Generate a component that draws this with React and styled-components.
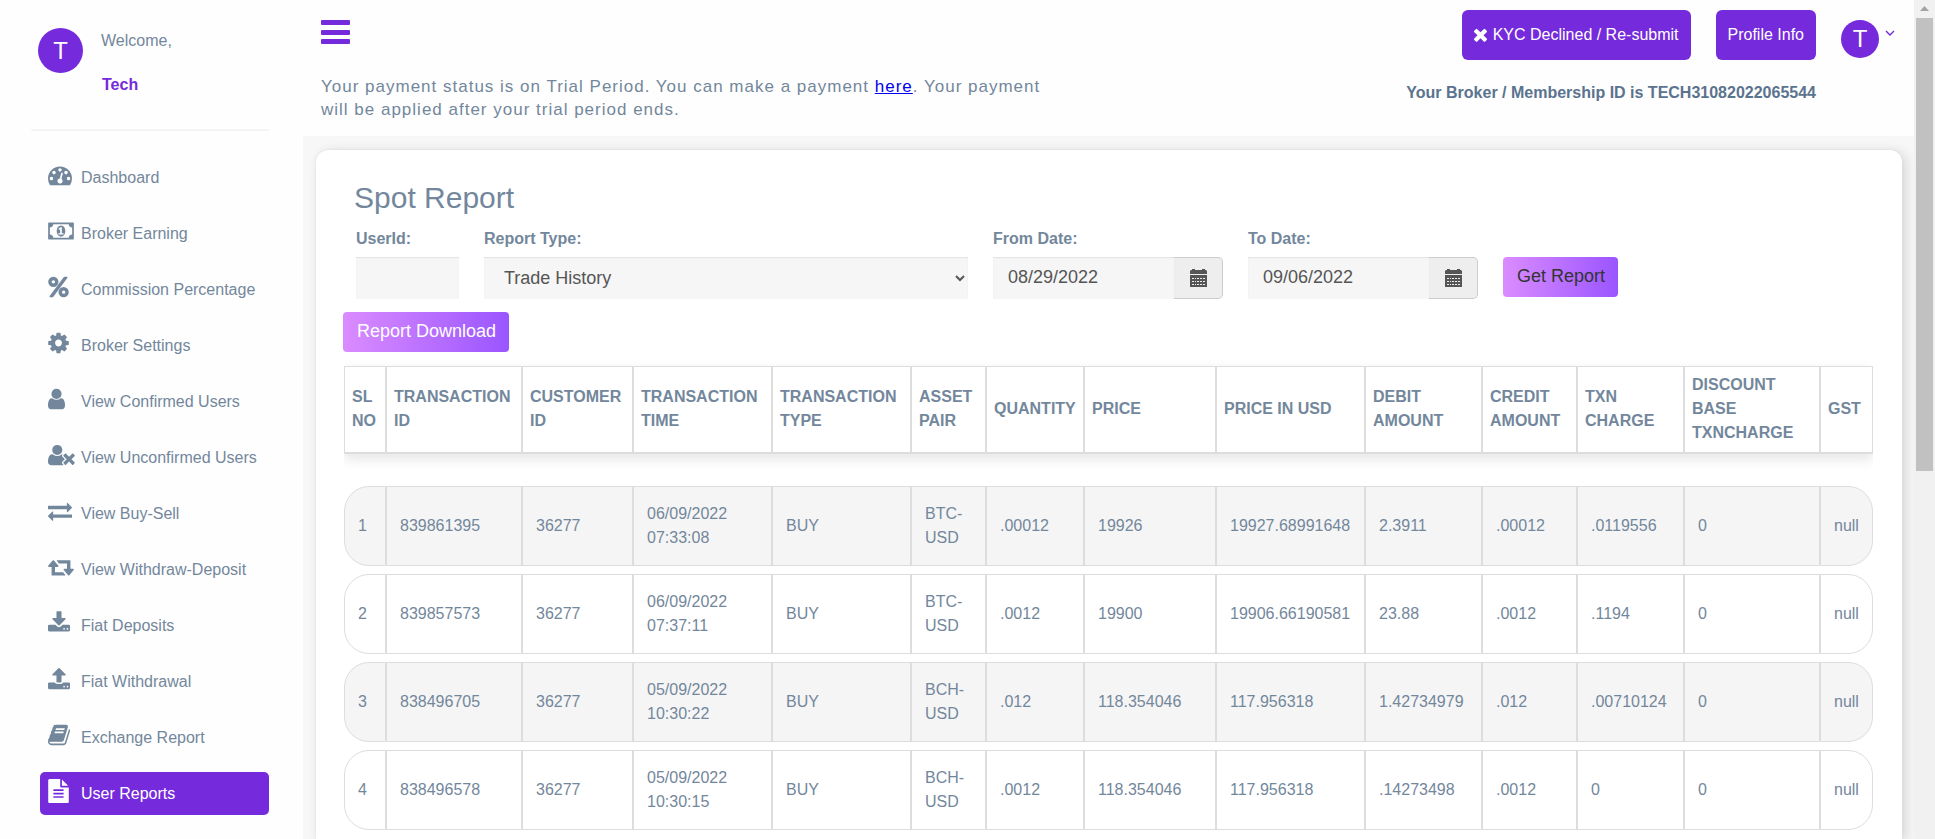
import React from "react";
import styled, { createGlobalStyle, css } from "styled-components";

const c = {
  purple: "#752adb",
  text: "#73879c",
  strong: "#5a738e",
  line: "#dddddd",
  field: "#f6f6f6",
};

const GlobalStyle = createGlobalStyle`
  *, *::before, *::after { box-sizing: border-box; }
  html, body { margin: 0; padding: 0; }
  body {
    font-family: "Liberation Sans", Arial, sans-serif;
    font-size: 16px;
    line-height: 24px;
    color: ${c.text};
    background: #fefefe;
  }
  button, input, select { font-family: inherit; }
`;

const Page = styled.div`
  display: flex;
  height: 100vh;
  overflow: hidden;
`;

/* ---------- sidebar ---------- */

const Sidebar = styled.aside`
  flex: 0 0 303px;
  padding: 28px 34px 0 31px;
  background: #fefefe;
`;

const Profile = styled.div`
  display: flex;
  align-items: flex-start;
  gap: 18px;
  height: 103px;
  padding-left: 7px;
  border-bottom: 2px solid #f5f5f5;
`;

const Avatar = styled.span`
  display: flex;
  flex: none;
  align-items: center;
  justify-content: center;
  width: ${(p) => p.$size}px;
  height: ${(p) => p.$size}px;
  border-radius: 50%;
  background: ${c.purple};
  color: #fff;
  font-size: 24px;
`;

const Greeting = styled.div`
  display: flex;
  flex-direction: column;
  gap: 20px;
  padding-top: 1px;
`;

const UserName = styled.strong`
  padding-left: 1px;
  color: ${c.purple};
`;

const Nav = styled.nav`
  display: flex;
  flex-direction: column;
  gap: 13px;
  padding: 25px 0 0 9px;
`;

const NavItem = styled.a`
  display: flex;
  align-items: flex-start;
  height: 43px;
  padding: 7px 0 0 8px;
  border-radius: 5px;
  color: ${c.text};
  text-decoration: none;
  white-space: nowrap;
  ${(p) =>
    p.$active &&
    css`
      background: ${c.purple};
      color: #fff;
    `}
`;

const NavIcon = styled.span`
  display: flex;
  flex: 0 0 33px;
  height: 24px;
`;

const NavLabel = styled.span`
  padding-top: 3px;
`;

/* ---------- top bar ---------- */

const Main = styled.div`
  display: flex;
  flex: 1;
  flex-direction: column;
  min-width: 0;
  background: #f7f7f7;
`;

const TopBar = styled.header`
  display: flex;
  flex: 0 0 136px;
  justify-content: space-between;
  gap: 40px;
  padding: 10px 19px 0 18px;
  background: #fefefe;
`;

const Notice = styled.div`
  max-width: 730px;
`;

const MenuButton = styled.button`
  display: block;
  margin: 10px 0 31px;
  padding: 0;
  border: 0;
  background: none;
  color: ${c.purple};
  line-height: 0;
`;

const NoticeText = styled.p`
  margin: 0;
  font-size: 17px;
  letter-spacing: 1px;
  line-height: 23px;
  a { color: #0000ee; }
`;

const Account = styled.div`
  display: flex;
  flex-direction: column;
  gap: 21px;
`;

const AccountRow = styled.div`
  display: flex;
  align-items: center;
  justify-content: flex-end;
  gap: 25px;
`;

const PurpleButton = styled.button`
  display: flex;
  align-items: center;
  gap: 6px;
  height: 50px;
  padding: 0 12px;
  border: 0;
  border-radius: 6px;
  background: ${c.purple};
  color: #fff;
  font-size: 16px;
  white-space: nowrap;
`;

const AccountMenu = styled.button`
  display: flex;
  align-items: flex-start;
  gap: 6px;
  margin-top: 7px;
  padding: 0;
  border: 0;
  background: none;
  color: ${c.purple};
  svg { margin-top: 10px; }
`;

const MemberId = styled.strong`
  padding-right: 79px;
  color: ${c.strong};
  text-align: right;
`;

/* ---------- report card ---------- */

const Card = styled.main`
  flex: 1;
  margin: 14px 12px 0 13px;
  padding: 30px 29px 0 27px;
  border-radius: 12px 12px 0 0;
  background: #fff;
  box-shadow: 0 0 2px #d8d8d8, 4px 2px 12px #d9d5d9;
`;

const Title = styled.h1`
  margin: 0 0 11px 11px;
  font-size: 30px;
  font-weight: 400;
  line-height: 36px;
`;

const Filters = styled.form`
  display: grid;
  grid-template-columns: 103fr 484fr 230fr 230fr 370fr;
  gap: 25px;
  align-items: end;
  padding-left: 13px;
`;

const Field = styled.div`
  display: flex;
  flex-direction: column;
  gap: 6px;
`;

const FieldLabel = styled.label`
  font-weight: 700;
`;

const control = css`
  width: 100%;
  min-width: 0;
  height: 42px;
  border: 0;
  border-radius: 0;
  background: ${c.field};
  box-shadow: inset 0 1px 1px #e2e2e2;
  color: #555;
  font-size: 18px;
`;

const TextInput = styled.input`
  ${control}
  padding: 0 15px 2px;
`;

const Select = styled.select`
  ${control}
  padding: 0 0 0 16px;
`;

const DateGroup = styled.div`
  display: flex;
`;

const CalendarButton = styled.button`
  display: flex;
  flex: 0 0 49px;
  align-items: center;
  justify-content: center;
  height: 42px;
  padding: 0;
  border: 1px solid #ccc;
  border-left: 0;
  border-radius: 0 5px 5px 0;
  background: #eee;
  color: #555;
`;

const GradientButton = styled.button`
  justify-self: start;
  height: 40px;
  padding: 0 13px 2px 14px;
  border: 0;
  border-radius: 4px;
  background: linear-gradient(90deg, #da8cff, #9a55ff);
  color: ${(p) => (p.$dark ? "#333" : "#fff")};
  font-size: 18px;
`;

const SubmitCell = styled.div`
  height: 42px;
`;

const Download = styled.div`
  margin-top: 13px;
  line-height: 0;
`;

const TableArea = styled.div`
  margin-left: 1px;
  padding-top: 6px;
  overflow: hidden;
`;

const Table = styled.table`
  width: 100%;
  table-layout: fixed;
  border-collapse: separate;
  border-spacing: 0 8px;
  tbody::before {
    content: "";
    display: block;
    height: 16px;
  }
`;

const HeadRow = styled.tr`
  height: 88px;
  box-shadow: 0 5px 12px #e6e4e6;
`;

const HeadCell = styled.th`
  padding: 0 4px 2px 7px;
  border: 1px solid ${c.line};
  border-bottom-width: 2px;
  background: #fff;
  text-align: left;
  text-transform: uppercase;
`;

const Row = styled.tr`
  height: 80px;
  background: #fff;
  &:nth-child(odd) td { background: #f5f5f5; }
`;

const Cell = styled.td`
  padding: 0 8px 0 13px;
  border: 1px solid ${c.line};
  &:first-child { border-radius: 25px 0 0 25px; }
  &:last-child { border-radius: 0 25px 25px 0; }
`;

/* ---------- window scroll bar ---------- */

const ScrollTrack = styled.div`
  display: flex;
  flex: 0 0 21px;
  flex-direction: column;
  align-items: center;
  background: #f1f1f1;
`;

const ScrollArrow = styled.svg`
  flex: none;
  margin: 6px 0 7px;
`;

const ScrollThumb = styled.div`
  width: 17px;
  height: 54%;
  background: #c1c1c1;
`;

/* ---------- icons ---------- */

function Glyph({ box, path, height = 24 }) {
  const [, , w, h] = box.split(" ").map(Number);
  return (
    <svg viewBox={box} width={Math.round((w * height) / h)} height={height} fill="currentColor" fillRule="evenodd" aria-hidden="true">
      <path d={path} />
    </svg>
  );
}

const icons = {
  gauge: {
    box: "0 0 1792 1792",
    path: "M384 1152q0-53-37.5-90.5t-90.5-37.5-90.5 37.5-37.5 90.5 37.5 90.5 90.5 37.5 90.5-37.5 37.5-90.5zm192-448q0-53-37.5-90.5t-90.5-37.5-90.5 37.5-37.5 90.5 37.5 90.5 90.5 37.5 90.5-37.5 37.5-90.5zm428 481l101-382q6-26-7.5-48.5t-38.5-29.5-48 6.5-30 39.5l-101 382q-60 5-107 43.5t-63 98.5q-20 77 20 146t117 89 146-20 89-117q16-60-6-117t-72-91zm660-33q0-53-37.5-90.5t-90.5-37.5-90.5 37.5-37.5 90.5 37.5 90.5 90.5 37.5 90.5-37.5 37.5-90.5zm-640-640q0-53-37.5-90.5t-90.5-37.5-90.5 37.5-37.5 90.5 37.5 90.5 90.5 37.5 90.5-37.5 37.5-90.5zm448 192q0-53-37.5-90.5t-90.5-37.5-90.5 37.5-37.5 90.5 37.5 90.5 90.5 37.5 90.5-37.5 37.5-90.5zm320 448q0 261-141 483-19 29-54 29h-1402q-35 0-54-29-141-221-141-483 0-182 71-348t191-286 286-191 348-71 348 71 286 191 191 286 71 348z",
  },
  money: {
    box: "0 -128 1920 1792",
    path: "M768 1024h384v-96h-128v-448h-114l-148 137 77 80q42-37 55-57h2v288h-128v96zm512-256q0 70-21 142t-59.5 134-101.5 101-138 39-138-39-101.5-101-59.5-134-21-142 21-142 59.5-134 101.5-101 138-39 138 39 101.5 101 59.5 134 21 142zm512 256v-512q-106 0-181-75t-75-181h-1152q0 106-75 181t-181 75v512q106 0 181 75t75 181h1152q0-106 75-181t181-75zm128-832v1152q0 26-19 45t-45 19h-1792q-26 0-45-19t-19-45v-1152q0-26 19-45t45-19h1792q26 0 45 19t19 45z",
  },
  percent: {
    box: "0 0 1536 1792",
    path: "M384 128a384 384 0 1 0 0 768 384 384 0 1 0 0-768zm0 256a128 128 0 1 1 0 256 128 128 0 1 1 0-256zM1152 896a384 384 0 1 0 0 768 384 384 0 1 0 0-768zm0 256a128 128 0 1 1 0 256 128 128 0 1 1 0-256zM1376 128q26 0 45 19t19 45q0 20-13 38l-1056 1408q-19 26-51 26h-160q-26 0-45-19t-19-45q0-20 13-38l1056-1408q19-26 51-26z",
  },
  cog: {
    box: "128 0 1536 1792",
    path: "M1152 896q0-106-75-181t-181-75-181 75-75 181 75 181 181 75 181-75 75-181zm512-109v222q0 12-8 23t-20 13l-185 28q-19 54-39 91 35 50 107 138 10 12 10 25t-9 23q-27 37-99 108t-94 71q-12 0-26-9l-138-108q-44 23-91 38-16 136-29 186-7 28-36 28h-222q-14 0-24.5-8.5t-11.5-21.5l-28-184q-49-16-90-37l-141 107q-10 9-25 9-14 0-25-11-126-114-165-168-7-10-7-23 0-12 8-23 15-21 51-66.5t54-70.5q-27-50-41-99l-183-27q-13-2-21-12.5t-8-23.5v-222q0-12 8-23t19-13l186-28q14-46 39-92-40-57-107-138-10-12-10-24 0-10 9-23 26-36 98.5-107.5t94.5-71.5q13 0 26 10l138 107q44-23 91-38 16-136 29-186 7-28 36-28h222q14 0 24.5 8.5t11.5 21.5l28 184q49 16 90 37l142-107q9-9 24-9 13 0 25 10 129 119 165 170 7 8 7 22 0 12-8 23-15 21-51 66.5t-54 70.5q26 50 41 98l183 28q13 2 21 12.5t8 23.5z",
  },
  user: {
    box: "256 0 1280 1792",
    path: "M1536 1399q0 109-62.5 187t-150.5 78h-854q-88 0-150.5-78t-62.5-187q0-85 8.5-160.5t31.5-152 58.5-131 94-89 134.5-34.5q131 128 313 128t313-128q76 0 134.5 34.5t94 89 58.5 131 31.5 152 8.5 160.5zm-256-887q0 159-112.5 271.5t-271.5 112.5-271.5-112.5-112.5-271.5 112.5-271.5 271.5-112.5 271.5 112.5 112.5 271.5z",
  },
  userTimes: {
    box: "0 0 2048 1792",
    path: "M704 896q-159 0-271.5-112.5t-112.5-271.5 112.5-271.5 271.5-112.5 271.5 112.5 112.5 271.5-112.5 271.5-271.5 112.5zm1077 320l249 249q9 9 9 23 0 13-9 22l-136 136q-9 9-22 9-14 0-23-9l-249-249-249 249q-9 9-23 9-13 0-22-9l-136-136q-9-9-9-22 0-14 9-23l249-249-249-249q-9-9-9-23 0-13 9-22l136-136q9-9 22-9 14 0 23 9l249 249 249-249q9-9 23-9 13 0 22 9l136 136q9 9 9 22 0 14-9 23zm-498 0l-181 181q-37 37-37 91 0 53 37 90l83 83q-21 3-44 3h-874q-121 0-194-69t-73-190q0-53 3.5-103.5t14-109 26.5-108.5 43-97.5 62-81 85.5-53.5 111.5-20q19 0 39 17 154 122 319 122t319-122q20-17 39-17 28 0 57 6-28 27-41 50t-13 56q0 54 37 91z",
  },
  exchange: {
    box: "0 0 1792 1792",
    path: "M1792 1184v192q0 13-9.5 22.5t-22.5 9.5h-1376v192q0 13-9.5 22.5t-22.5 9.5q-12 0-24-10l-319-320q-9-9-9-22 0-14 9-23l320-320q9-9 23-9 13 0 22.5 9.5t9.5 22.5v192h1376q13 0 22.5 9.5t9.5 22.5zm0-544q0 14-9 23l-320 320q-9 9-23 9-13 0-22.5-9.5t-9.5-22.5v-192h-1376q-13 0-22.5-9.5t-9.5-22.5v-192q0-13 9.5-22.5t22.5-9.5h1376v-192q0-14 9-23t23-9q12 0 24 10l319 319q9 9 9 23z",
  },
  retweet: {
    box: "0 128 1920 1792",
    path: "M1280 1632q0 13-9.5 22.5t-22.5 9.5h-960q-8 0-13.5-2t-9-7-5.5-8-3-11.5-1-11.5v-600h-192q-26 0-45-19t-19-45q0-24 15-41l320-384q19-22 49-22t49 22l320 384q15 17 15 41 0 26-19 45t-45 19h-192v384h576q16 0 25 11l160 192q7 10 7 21zm640-416q0 24-15 41l-320 384q-20 23-49 23t-49-23l-320-384q-15-17-15-41 0-26 19-45t45-19h192v-384h-576q-16 0-25-12l-160-192q-7-9-7-20 0-13 9.5-22.5t22.5-9.5h960q8 0 13.5 2t9 7 5.5 8 3 11.5 1 11.5v600h192q26 0 45 19t19 45z",
  },
  download: {
    box: "64 0 1664 1792",
    path: "M1344 1344q0-26-19-45t-45-19-45 19-19 45 19 45 45 19 45-19 19-45zm256 0q0-26-19-45t-45-19-45 19-19 45 19 45 45 19 45-19 19-45zm128-224v320q0 40-28 68t-68 28h-1472q-40 0-68-28t-28-68v-320q0-40 28-68t68-28h465l135 136q58 56 136 56t136-56l136-136h464q40 0 68 28t28 68zm-325-569q17 41-14 70l-448 448q-18 19-45 19t-45-19l-448-448q-31-29-14-70 17-39 59-39h256v-448q0-26 19-45t45-19h256q26 0 45 19t19 45v448h256q42 0 59 39z",
  },
  upload: {
    box: "64 0 1664 1792",
    path: "M1344 1472q0-26-19-45t-45-19-45 19-19 45 19 45 45 19 45-19 19-45zm256 0q0-26-19-45t-45-19-45 19-19 45 19 45 45 19 45-19 19-45zm128-224v320q0 40-28 68t-68 28h-1472q-40 0-68-28t-28-68v-320q0-40 28-68t68-28h427q21 56 70.5 92t110.5 36h256q61 0 110.5-36t70.5-92h427q40 0 68 28t28 68zm-325-648q-17 40-59 40h-256v448q0 26-19 45t-45 19h-256q-26 0-45-19t-19-45v-448h-256q-42 0-59-40-17-39 14-69l448-448q18-19 45-19t45 19l448 448q31 30 14 69z",
  },
  book: {
    box: "0 0 1664 1792",
    path: "M1639 478q40 57 18 129l-275 906q-19 64-76.5 107.5t-122.5 43.5h-923q-77 0-148.5-53.5t-99.5-131.5q-24-67-2-127 0-4 3-27t4-37q1-8-3-21.5t-3-19.5q2-11 8-21t16.5-23.5 16.5-23.5q23-38 45-91.5t30-91.5q3-10 .5-30t-.5-28q3-11 17-28t17-23q21-36 42-92t25-90q1-9-2.5-32t.5-28q4-13 22-30.5t22-22.5q19-26 42.5-84.5t27.5-96.5q1-8-3-25.5t-2-26.5q2-8 9-18t18-23 17-21q8-12 16.5-30.5t15-35 16-36 19.5-32 26.5-23.5 36-11.5 47.5 5.5l-1 3q38-9 51-9h761q74 0 114 56t18 130l-274 906q-36 119-71.5 153.5t-128.5 34.5h-869q-27 0-38 15-11 16-1 43 24 70 144 70h923q29 0 56-15.5t35-41.5l300-987q7-22 5-57 38 15 59 43zm-1064 2q-4 13 2 22.5t20 9.5h608q13 0 25.5-9.5t16.5-22.5l21-64q4-13-2-22.5t-20-9.5h-608q-13 0-25.5 9.5t-16.5 22.5zm-83 256q-4 13 2 22.5t20 9.5h608q13 0 25.5-9.5t16.5-22.5l21-64q4-13-2-22.5t-20-9.5h-608q-13 0-25.5 9.5t-16.5 22.5z",
  },
  file: {
    box: "128 0 1536 1792",
    path: "M1596 476q14 14 28 36h-472v-472q22 14 36 28zm-476 164h544v1056q0 40-28 68t-68 28h-1344q-40 0-68-28t-28-68v-1600q0-40 28-68t68-28h800v544q0 40 28 68t68 28zm160 736v-64q0-14-9-23t-23-9h-704q-14 0-23 9t-9 23v64q0 14 9 23t23 9h704q14 0 23-9t9-23zm0-256v-64q0-14-9-23t-23-9h-704q-14 0-23 9t-9 23v64q0 14 9 23t23 9h704q14 0 23-9t9-23zm0-256v-64q0-14-9-23t-23-9h-704q-14 0-23 9t-9 23v64q0 14 9 23t23 9h704q14 0 23-9t9-23z",
  },
  times: {
    box: "302 302 1188 1252",
    path: "M1490 1322q0 40-28 68l-136 136q-28 28-68 28t-68-28l-294-294-294 294q-28 28-68 28t-68-28l-136-136q-28-28-28-68t28-68l294-294-294-294q-28-28-28-68t28-68l136-136q28-28 68-28t68 28l294 294 294-294q28-28 68-28t68 28l136 136q28 28 28 68t-28 68l-294 294 294 294q28 28 28 68z",
  },
};

const BarsIcon = () => (
  <svg width="29" height="24" viewBox="0 0 29 24" fill="currentColor" aria-hidden="true">
    <rect width="29" height="5" rx="1" />
    <rect y="10" width="29" height="5" rx="1" />
    <rect y="19" width="29" height="5" rx="1" />
  </svg>
);

const ChevronIcon = () => (
  <svg width="10" height="7" viewBox="0 0 10 7" fill="none" stroke="currentColor" strokeWidth="1.4" aria-hidden="true">
    <path d="M1 1l4 4 4-4" />
  </svg>
);

const CalendarIcon = () => (
  <svg width="17" height="18" viewBox="0 0 17 18" fill="currentColor" aria-hidden="true">
    <path d="M1 1h1V0h3v1h7V0h3v1h1l1 1v3H0V2z" />
    <path
      fillRule="evenodd"
      d="M0 6h17v12H0zM2 9v1h2V9zm3 0v1h1V9zm2 0v1h2V9zm3 0v1h2V9zm3 0v1h2V9zM2 12v1h2v-1zm3 0v1h1v-1zm2 0v1h2v-1zm3 0v1h2v-1zm3 0v1h2v-1zM2 15v1h2v-1zm3 0v1h1v-1zm2 0v1h2v-1zm3 0v1h2v-1zm3 0v1h2v-1z"
    />
  </svg>
);

/* ---------- content ---------- */

const menu = [
  ["gauge", "Dashboard"],
  ["money", "Broker Earning"],
  ["percent", "Commission Percentage"],
  ["cog", "Broker Settings"],
  ["user", "View Confirmed Users"],
  ["userTimes", "View Unconfirmed Users"],
  ["exchange", "View Buy-Sell"],
  ["retweet", "View Withdraw-Deposit"],
  ["download", "Fiat Deposits"],
  ["upload", "Fiat Withdrawal"],
  ["book", "Exchange Report"],
  ["file", "User Reports"],
];

const columns = [
  ["Sl No", 42],
  ["Transaction ID", 136],
  ["Customer ID", 111],
  ["Transaction Time", 139],
  ["Transaction Type", 139],
  ["Asset Pair", 75],
  ["Quantity", 98],
  ["Price", 132],
  ["Price in USD", 149],
  ["Debit Amount", 117],
  ["Credit Amount", 95],
  ["Txn Charge", 107],
  ["Discount Base TxnCharge", 136],
  ["GST", 53],
];

const rows = [
  ["1", "839861395", "36277", "06/09/2022 07:33:08", "BUY", "BTC-USD", ".00012", "19926", "19927.68991648", "2.3911", ".00012", ".0119556", "0", "null"],
  ["2", "839857573", "36277", "06/09/2022 07:37:11", "BUY", "BTC-USD", ".0012", "19900", "19906.66190581", "23.88", ".0012", ".1194", "0", "null"],
  ["3", "838496705", "36277", "05/09/2022 10:30:22", "BUY", "BCH-USD", ".012", "118.354046", "117.956318", "1.42734979", ".012", ".00710124", "0", "null"],
  ["4", "838496578", "36277", "05/09/2022 10:30:15", "BUY", "BCH-USD", ".0012", "118.354046", "117.956318", ".14273498", ".0012", "0", "0", "null"],
];

function DateField({ id, label, value }) {
  return (
    <Field>
      <FieldLabel htmlFor={id}>{label}</FieldLabel>
      <DateGroup>
        <TextInput id={id} type="text" defaultValue={value} />
        <CalendarButton type="button" aria-label={`Choose ${label}`}>
          <CalendarIcon />
        </CalendarButton>
      </DateGroup>
    </Field>
  );
}

export default function App() {
  return (
    <>
      <GlobalStyle />
      <Page>
        <Sidebar>
          <Profile>
            <Avatar $size={45}>T</Avatar>
            <Greeting>
              <span>Welcome,</span>
              <UserName>Tech</UserName>
            </Greeting>
          </Profile>
          <Nav>
            {menu.map(([icon, label]) => (
              <NavItem key={label} href="#" $active={label === "User Reports"}>
                <NavIcon>
                  <Glyph {...icons[icon]} />
                </NavIcon>
                <NavLabel>{label}</NavLabel>
              </NavItem>
            ))}
          </Nav>
        </Sidebar>

        <Main>
          <TopBar>
            <Notice>
              <MenuButton type="button" aria-label="Toggle menu">
                <BarsIcon />
              </MenuButton>
              <NoticeText>
                Your payment status is on Trial Period. You can make a payment <a href="#">here</a>
                <span>. Your payment </span>
                <span>will be applied after your trial period ends.</span>
              </NoticeText>
            </Notice>
            <Account>
              <AccountRow>
                <PurpleButton type="button">
                  <Glyph {...icons.times} height={14} />
                  KYC Declined / Re-submit
                </PurpleButton>
                <PurpleButton type="button">Profile Info</PurpleButton>
                <AccountMenu type="button" aria-label="Account menu">
                  <Avatar $size={38}>T</Avatar>
                  <ChevronIcon />
                </AccountMenu>
              </AccountRow>
              <MemberId>Your Broker / Membership ID is TECH31082022065544</MemberId>
            </Account>
          </TopBar>

          <Card>
            <Title>Spot Report</Title>
            <Filters>
              <Field>
                <FieldLabel htmlFor="user-id">UserId:</FieldLabel>
                <TextInput id="user-id" type="text" />
              </Field>
              <Field>
                <FieldLabel htmlFor="report-type">Report Type:</FieldLabel>
                <Select id="report-type" defaultValue="trade">
                  <option value="trade">Trade History</option>
                </Select>
              </Field>
              <DateField id="from-date" label="From Date:" value="08/29/2022" />
              <DateField id="to-date" label="To Date:" value="09/06/2022" />
              <SubmitCell>
                <GradientButton type="button" $dark>
                  Get Report
                </GradientButton>
              </SubmitCell>
            </Filters>
            <Download>
              <GradientButton type="button">Report Download</GradientButton>
            </Download>
            <TableArea>
              <Table>
                <colgroup>
                  {columns.map(([name, width]) => (
                    <col key={name} width={width} />
                  ))}
                </colgroup>
                <thead>
                  <HeadRow>
                    {columns.map(([name]) => (
                      <HeadCell key={name} scope="col">
                        {name}
                      </HeadCell>
                    ))}
                  </HeadRow>
                </thead>
                <tbody>
                  {rows.map((row) => (
                    <Row key={row[0]}>
                      {row.map((value, i) => (
                        <Cell key={columns[i][0]}>{value}</Cell>
                      ))}
                    </Row>
                  ))}
                </tbody>
              </Table>
            </TableArea>
          </Card>
        </Main>

        <ScrollTrack aria-hidden="true">
          <ScrollArrow width="9" height="5" viewBox="0 0 9 5" fill="#a3a3a3">
            <path d="M0 5l4.5-5L9 5z" />
          </ScrollArrow>
          <ScrollThumb />
        </ScrollTrack>
      </Page>
    </>
  );
}
